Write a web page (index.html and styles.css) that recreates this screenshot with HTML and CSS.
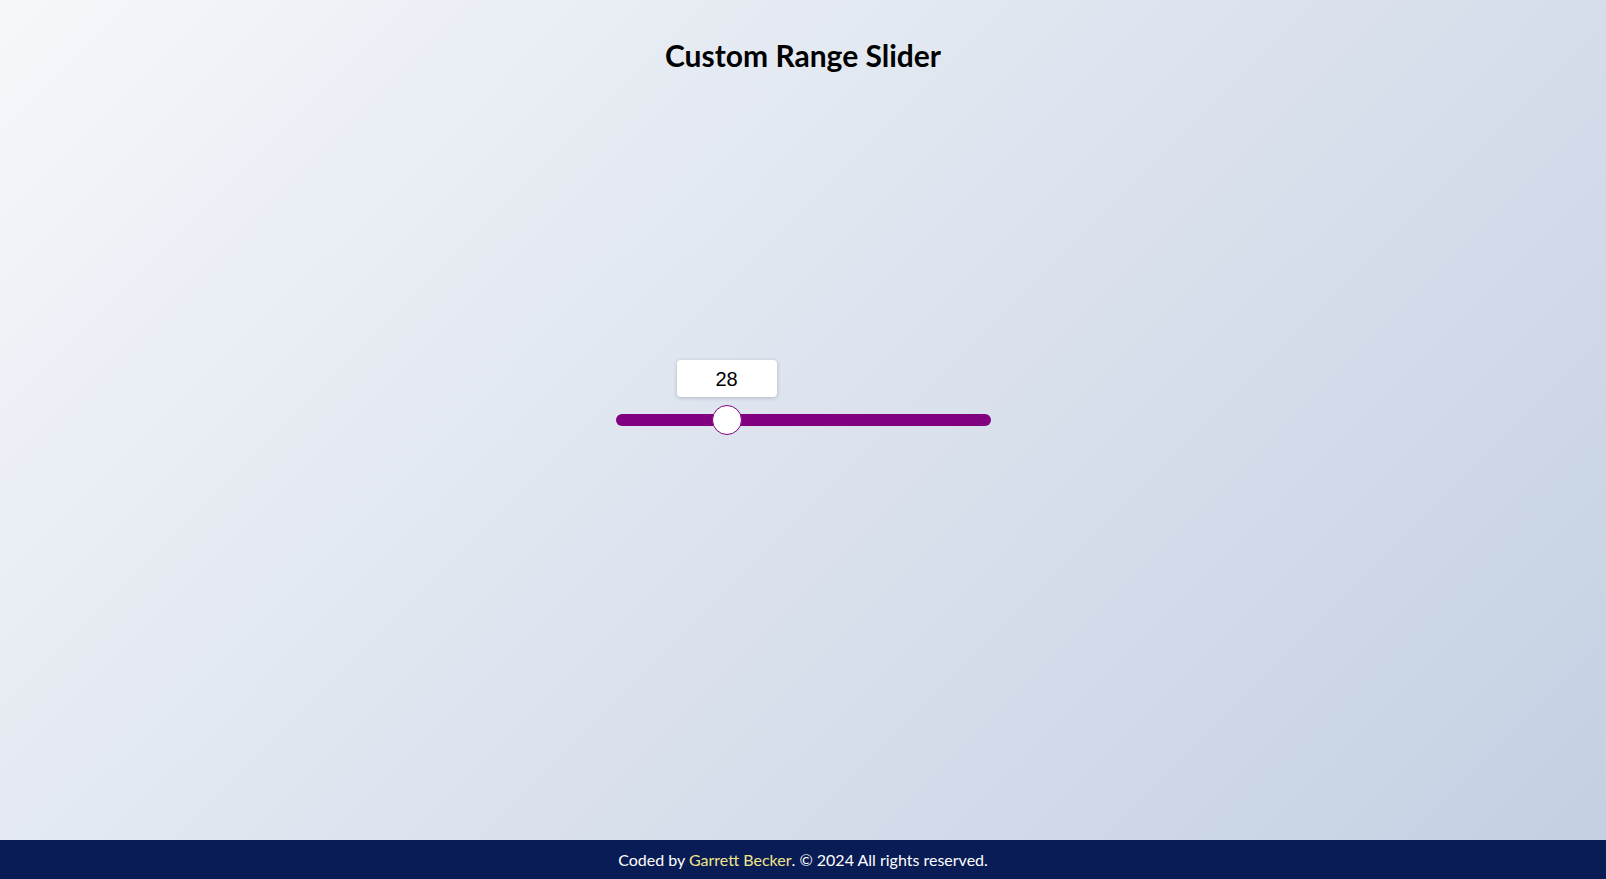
FILE: index.html
```html
<!DOCTYPE html>
<html lang="en">
<head>
<meta charset="UTF-8">
<title>Custom Range Slider</title>
<link rel="stylesheet" href="styles.css">
</head>
<body>
<div class="page">
  <h1 class="title">Custom Range Slider</h1>
  <div class="slider-wrap">
    <div class="slider-value" style="left: 111px;">28</div>
    <input class="slider" type="range" min="0" max="100" value="28">
  </div>
</div>
<footer class="footer">Coded by <a class="footer-link" href="#">Garrett Becker</a>. © 2024 All rights reserved.</footer>
</body>
</html>
```
FILE: styles.css
```css
* { box-sizing: border-box; }
html, body { margin: 0; padding: 0; }
body {
  font-family: Lato, "Open Sans", sans-serif;
  background: linear-gradient(135deg, #f5f7fa 0%, #c3cfe2 100%);
  min-height: 100vh;
  display: flex;
  flex-direction: column;
}
.page {
  flex: 1;
  display: grid;
  grid-template-areas: "stack";
  justify-items: center;
}
.title {
  grid-area: stack;
  align-self: start;
  margin: 37px 0 0;
  font-size: 30px;
  font-weight: 700;
  color: #000;
}
.slider-wrap {
  grid-area: stack;
  align-self: center;
  position: relative;
  width: 375px;
  height: 12px;
}
.slider {
  -webkit-appearance: none;
  appearance: none;
  display: block;
  width: 375px;
  height: 12px;
  margin: 0;
  background: #800080;
  border-radius: 6px;
  outline: none;
}
.slider::-webkit-slider-thumb {
  -webkit-appearance: none;
  appearance: none;
  width: 30px;
  height: 30px;
  border-radius: 50%;
  background: #fff;
  border: 1px solid #800080;
  cursor: pointer;
}
.slider-value {
  position: absolute;
  top: -54px;
  width: 100px;
  height: 37px;
  transform: translateX(-50%);
  background: #fff;
  border-radius: 4px;
  box-shadow: 0 1px 4px rgba(0, 0, 0, 0.2);
  font-family: "Liberation Sans", Arial, sans-serif;
  font-size: 20px;
  color: #000;
  display: flex;
  align-items: center;
  justify-content: center;
  padding-top: 1px;
}
.footer {
  height: 39px;
  background: #0a1c56;
  color: #fff;
  font-size: 16px;
  display: flex;
  align-items: center;
  justify-content: center;
  white-space: pre;
}
.footer-link {
  color: #f0e68c;
  text-decoration: none;
}
```
